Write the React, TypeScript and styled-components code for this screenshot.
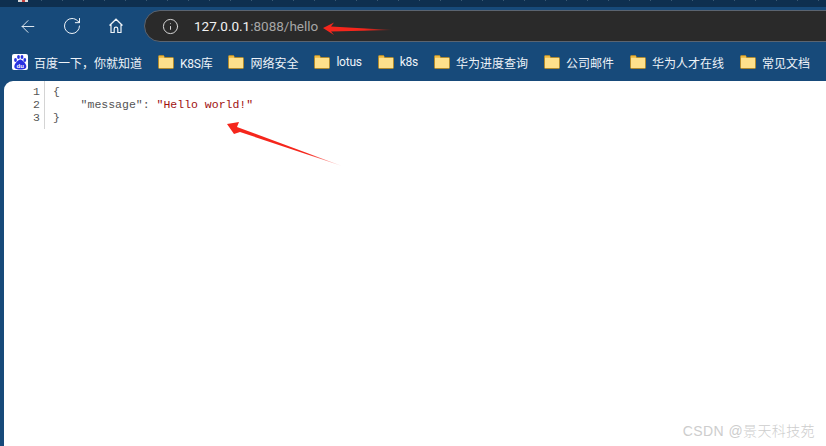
import styled, { createGlobalStyle } from "styled-components"
import { ArrowLeft, RotateCw, Info } from "lucide-react"

const bookmarks = ["K8S库", "网络安全", "lotus", "k8s", "华为进度查询", "公司邮件", "华为人才在线", "常见文档"]

const Global = createGlobalStyle`
    html,body{
        margin: 0;
        padding: 0;
        background: #174a7a;
    }
    #root{
        width: 826px;
        height: 446px;
        overflow: hidden;
    }
`
const Page = styled.div`
    position: relative;
    display: flex;
    flex-direction: column;
    width: 826px;
    height: 446px;
    background: #174a7a;
    font-family: Roboto, "Noto Sans CJK SC", sans-serif;
`
const TabStrip = styled.div`
    height: 7px;
    flex: none;
    padding-left: 18px;
    background-color: #0e2f4f;
    background-image: repeating-linear-gradient(90deg, transparent 0 20px, #3a5872 20px 21px);
    background-size: 100% 1px;
    background-repeat: no-repeat;
`
const Favicon = styled.div`
    width: 10px;
    height: 2px;
    background: linear-gradient(90deg, #d8d8d8 0 40%, #c8423e 40% 70%, #e0e0e0 70%);
`
const Toolbar = styled.div`
    display: flex;
    align-items: center;
    gap: 24px;
    height: 38px;
    flex: none;
    padding-left: 18px;
    color: #eef3f8;
`
const NavButton = styled.div`
    display: flex;
    align-items: center;
    justify-content: center;
    width: 20px;
    height: 20px;
`
const AddressBar = styled.div`
    flex: 1;
    display: flex;
    align-items: center;
    height: 30px;
    margin-left: -6px;
    margin-right: -20px;
    padding-left: 17px;
    background: #2a2a2a;
    border: 1px solid #5b6470;
    border-radius: 16px;
    font-size: 13.5px;
    color: #a6a6a6;
    svg{
        color: #d8d8d8;
        margin-right: 15px;
    }
    b{
        font-weight: 400;
        color: #f2f2f2;
    }
`
const BookmarkBar = styled.div`
    display: flex;
    align-items: center;
    height: 34px;
    padding-bottom: 2px;
    flex: none;
    padding-left: 12px;
    font-size: 12px;
    color: #eef3f8;
`
const Bookmark = styled.div<{$tight?:boolean}>`
    display: flex;
    align-items: center;
    gap: 6px;
    margin-right: 16px;
    white-space: nowrap;
    letter-spacing: ${(p)=>p.$tight ? "-0.25px" : "0"};
`
const Baidu = styled.div`
    display: flex;
    width: 16px;
    height: 16px;
    border-radius: 2px;
    background: #fff;
`
const Content = styled.div`
    flex: 1;
    display: flex;
    align-items: flex-start;
    margin-left: 4px;
    background: #fff;
    border-top-left-radius: 9px;
    font-family: "Liberation Mono", monospace;
    font-size: 11.5px;
    line-height: 13px;
    color: #555;
`
const Gutter = styled.div`
    width: 36px;
    padding: 4px 4px 5px 0;
    text-align: right;
    border-right: 1px solid #d4d4d4;
`
const Code = styled.pre`
    margin: 0;
    padding: 4px 0 0 8px;
    font: inherit;
    span{
        color: #a01010;
    }
`
const Overlay = styled.svg`
    position: absolute;
    left: 0;
    top: 0;
    pointer-events: none;
`
const Watermark = styled.div`
    position: absolute;
    right: 11px;
    bottom: 6px;
    font-family: "Liberation Sans", "Noto Sans CJK SC", sans-serif;
    font-weight: 300;
    font-size: 14px;
    color: #cdcdcd;
    letter-spacing: 0.4px;
    white-space: nowrap;
`

function Folder(){
    return(
        <svg width="16" height="14" viewBox="0 0 16 14">
            <path d="M.5 1.500a1 1 0 0 1 1-1h4l1 2h8a1 1 0 0 1 1 1v9a1 1 0 0 1-1 1h-13a1 1 0 0 1-1-1z" fill="#fde08c" stroke="#b08a2e"/>
            <path d="M1 1h4.500l.8 1.800H1z" fill="#eeb83e"/>
        </svg>
    )
}
function HomeIcon(){
    return(
        <svg width="16" height="16" viewBox="0 0 16 16" fill="none" stroke="currentColor" strokeWidth="1.200">
            <path d="M1.500 7.500 8 1.200l6.500 6.300M3 6.500v8h3.200v-3.500a1.800 1.800 0 0 1 3.600 0v3.500H13v-8"/>
        </svg>
    )
}
function BaiduIcon(){
    return(
        <svg width="16" height="16" viewBox="0 0 16 16" fill="#2932e1">
            <ellipse cx="3.500" cy="6" rx="1.400" ry="1.900"/>
            <ellipse cx="6.500" cy="3" rx="1.400" ry="1.900"/>
            <ellipse cx="10" cy="3" rx="1.400" ry="1.900"/>
            <ellipse cx="12.800" cy="6" rx="1.400" ry="1.900"/>
            <path d="M8.300 5.500c-2 0-6 4-6 7 0 2 1.500 3 6 3s6-1 6-3c0-3-4-7-6-7z"/>
            <text x="8.200" y="14" fontSize="6" fontFamily="Liberation Sans" fontWeight="700" textAnchor="middle" fill="#fff">du</text>
        </svg>
    )
}

export default function App(){
    return(
        <Page>
            <Global/>
            <TabStrip><Favicon/></TabStrip>
            <Toolbar>
                <NavButton><ArrowLeft size={21} strokeWidth={1.1}/></NavButton>
                <NavButton><RotateCw size={20} strokeWidth={1.2}/></NavButton>
                <NavButton><HomeIcon/></NavButton>
                <AddressBar>
                    <Info size={17} strokeWidth={1.4}/>
                    <div><b>127.0.0.1</b>:8088/hello</div>
                </AddressBar>
            </Toolbar>
            <BookmarkBar>
                <Bookmark>
                    <Baidu><BaiduIcon/></Baidu>
                    百度一下，你就知道
                </Bookmark>
                {bookmarks.map((name)=>(
                    <Bookmark key={name} $tight={/[a-z]/i.test(name)}><Folder/>{name}</Bookmark>
                ))}
            </BookmarkBar>
            <Content>
                <Gutter>1<br/>2<br/>3</Gutter>
                <Code>{"{\n    \"message\": "}<span>"Hello world!"</span>{"\n}"}</Code>
            </Content>
            <Overlay width="826" height="446" viewBox="0 0 826 446">
                <defs>
                    <linearGradient id="fade1" x1="323" y1="28" x2="392" y2="30" gradientUnits="userSpaceOnUse">
                        <stop offset="0.6" stopColor="#f5261c"/>
                        <stop offset="1" stopColor="#f5261c" stopOpacity="0.3"/>
                    </linearGradient>
                    <linearGradient id="fade2" x1="226" y1="123" x2="342" y2="166" gradientUnits="userSpaceOnUse">
                        <stop offset="0.7" stopColor="#f5261c"/>
                        <stop offset="1" stopColor="#f5261c" stopOpacity="0.2"/>
                    </linearGradient>
                </defs>
                <path d="M323 28 L334 22.500 L331 26.500 L392 30 L331 31.500 L334 35 Z" fill="url(#fade1)"/>
                <path d="M227 124 L239 122 L237 127 L342 166 L240 132 L234 134 Z" fill="url(#fade2)"/>
            </Overlay>
            <Watermark>CSDN @景天科技苑</Watermark>
        </Page>
    )
}
